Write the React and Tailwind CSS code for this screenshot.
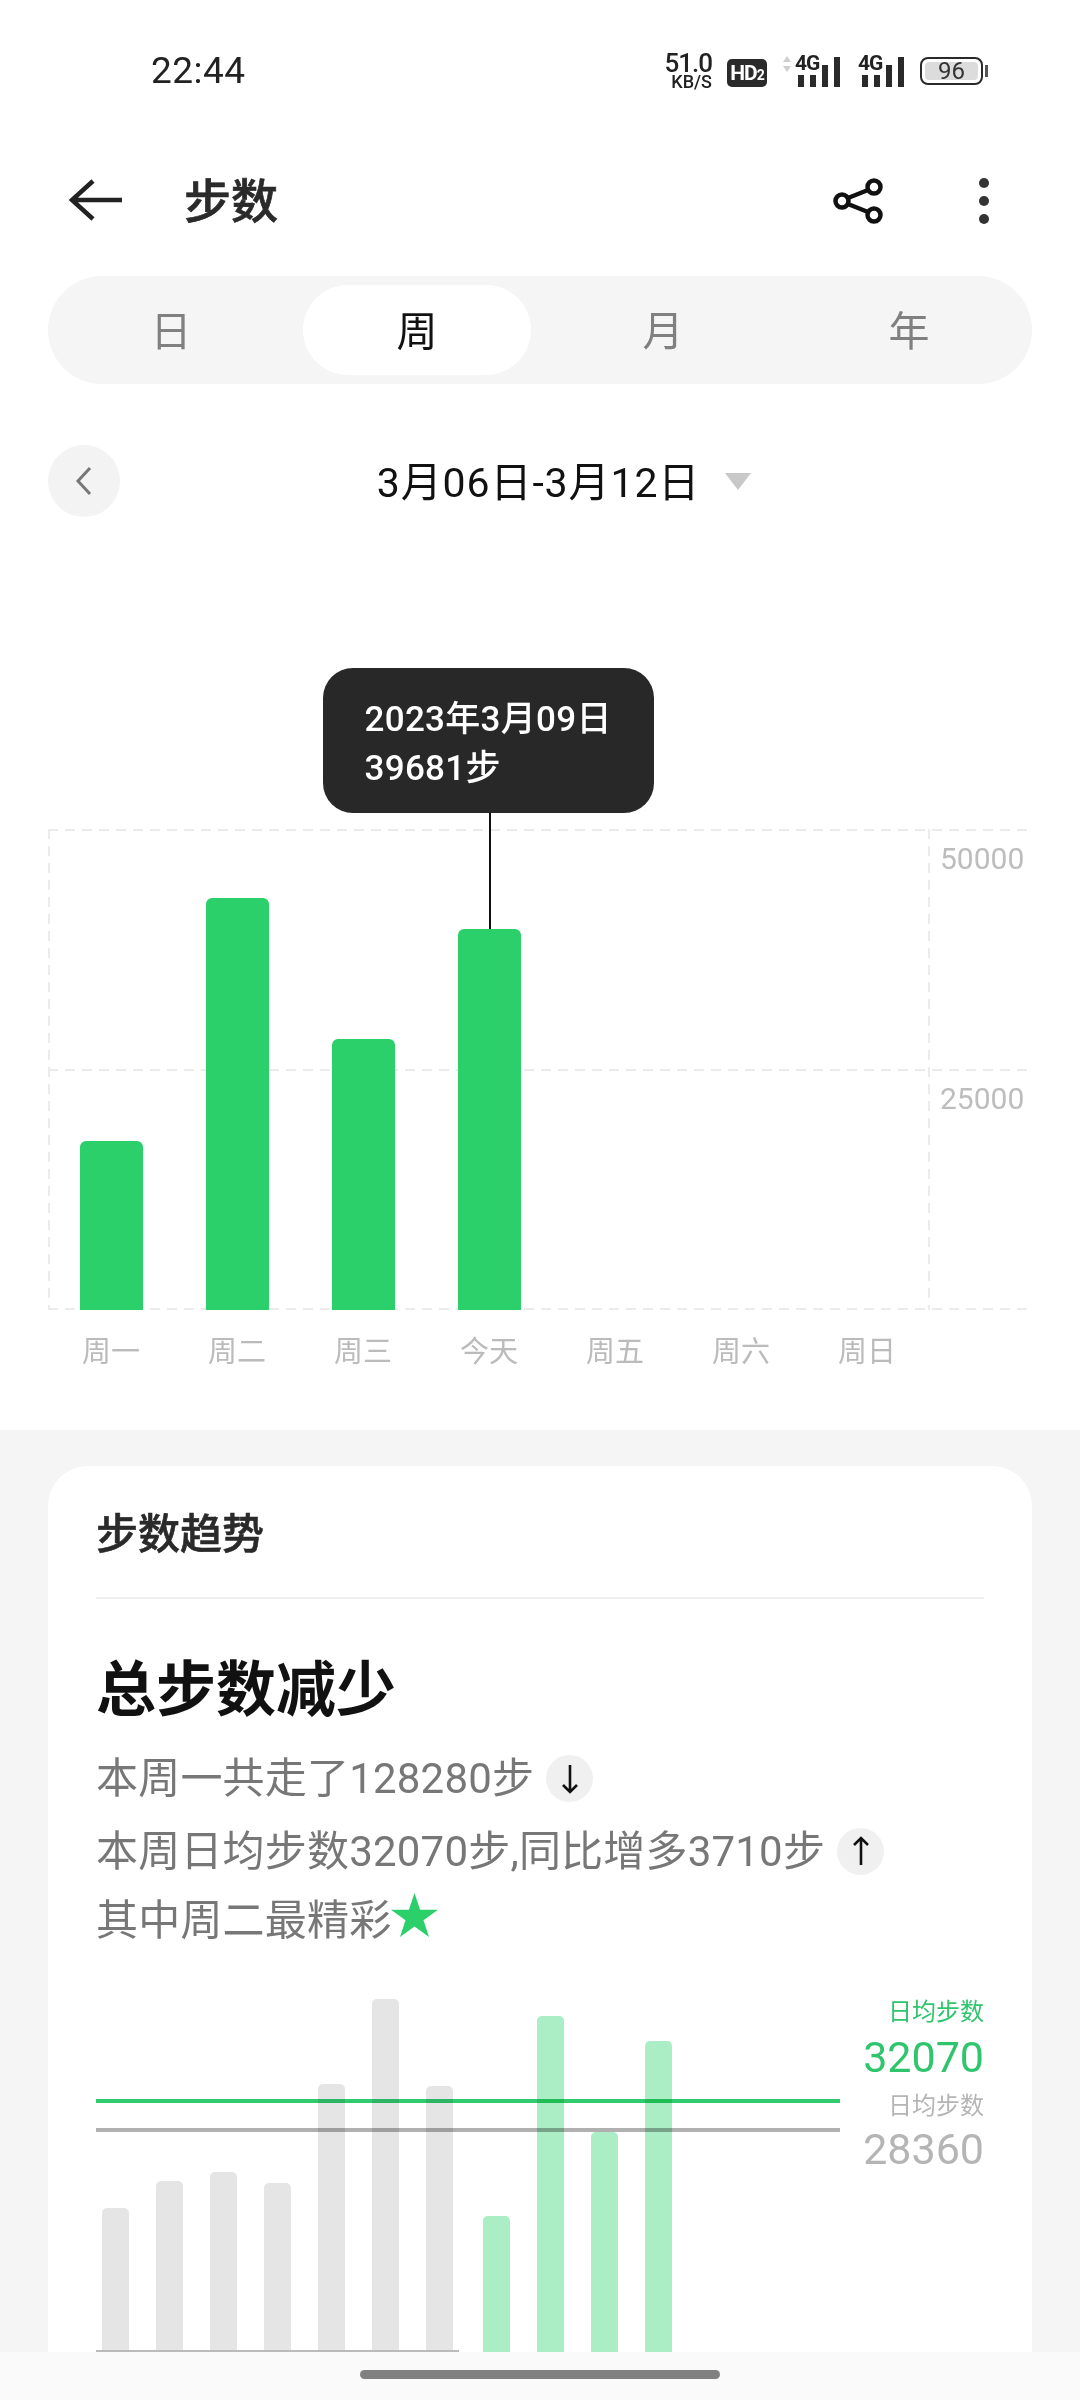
const weekBars = [
  { label: '周一', height: 169 },
  { label: '周二', height: 412 },
  { label: '周三', height: 271 },
  { label: '今天', height: 381, active: true },
  { label: '周五', height: 0 },
  { label: '周六', height: 0 },
  { label: '周日', height: 0 },
];

const lastWeekBars = [144, 171, 180, 169, 268, 353, 266];
const thisWeekBars = [136, 336, 220, 311];

const DashH = () => (
  <div className="h-[2px] w-full bg-[repeating-linear-gradient(90deg,#ebebeb_0,#ebebeb_10px,transparent_10px,transparent_17px)]" />
);

const DashV = () => (
  <div className="w-[2px] h-full bg-[repeating-linear-gradient(180deg,#ebebeb_0,#ebebeb_10px,transparent_10px,transparent_17px)]" />
);

const SignalBars = () => (
  <div className="flex items-end gap-[6px]">
    <div className="w-[6px] h-[12px] bg-[#2a2a2a]" />
    <div className="w-[6px] h-[12px] bg-[#2a2a2a]" />
    <div className="w-[6px] h-[22px] bg-[#2a2a2a]" />
    <div className="w-[6px] h-[30px] bg-[#2a2a2a]" />
  </div>
);

const StatusBar = () => (
  <div className="h-[140px] flex items-start justify-between pl-[151px] pr-[92px] pt-[52px] text-[#222]">
    <span className="text-[37px] leading-[38px] tracking-[0.5px]">22:44</span>
    <div className="flex items-start">
      <div className="w-[48px] flex flex-col items-end font-medium">
        <span className="text-[26px] leading-[22px] tracking-[-1px]">51.0</span>
        <span className="text-[18px] leading-[16px]">KB/S</span>
      </div>
      <div className="ml-[15px] mt-[7px] w-[40px] h-[28px] rounded-[5px] bg-[#2a2a2a] text-white text-[21px] leading-[28px] font-bold text-center tracking-[-1px]">
        HD<span className="text-[14px]">2</span>
      </div>
      <div className="relative ml-[15px] mt-[3px] w-[59px] h-[32px]">
        <svg className="absolute left-0 top-[1px]" width="10" height="16" viewBox="0 0 10 16">
          <path d="M5 0l4 6H1zM5 16l4-6H1z" fill="#cfcfcf" />
        </svg>
        <span className="absolute left-[13px] top-[-2px] text-[21px] leading-[20px] font-bold tracking-[-1px]">4G</span>
        <div className="absolute left-[16px] bottom-0">
          <SignalBars />
        </div>
      </div>
      <div className="relative ml-[17px] mt-[3px] w-[45px] h-[32px]">
        <span className="absolute left-0 top-[-2px] text-[21px] leading-[20px] font-bold tracking-[-1px]">4G</span>
        <div className="absolute left-[4px] bottom-0">
          <SignalBars />
        </div>
      </div>
      <div className="ml-[17px] mt-[5px] flex items-center">
        <div className="w-[63px] h-[28px] rounded-[8px] border-[2px] border-[#2a2a2a] p-[3px]">
          <div className="h-full rounded-[4px] bg-[#dcdcdc] text-[24px] leading-[18px] text-center text-[#333]">96</div>
        </div>
        <div className="ml-[2px] w-[3px] h-[12px] bg-[#555]" />
      </div>
    </div>
  </div>
);

const Header = () => (
  <div className="h-[120px] flex items-center justify-between pl-[68px] pr-[91px]">
    <div className="flex items-center">
      <svg width="56" height="44" viewBox="0 0 56 44" fill="none" stroke="#222" strokeWidth="4.5">
        <path d="M54 22H5M25 3 4 22l21 19" />
      </svg>
      <span className="ml-[60px] pt-[3px] text-[47px] leading-[60px] font-medium text-[#2a2a2a] [-webkit-text-stroke:0.7px_#2a2a2a]">步数</span>
    </div>
    <div className="flex items-center mt-[2px]">
      <svg width="50" height="48" viewBox="0 0 50 48" fill="none" stroke="#111" strokeWidth="4.5">
        <circle cx="9" cy="24" r="6.5" />
        <circle cx="41" cy="10" r="6.5" />
        <circle cx="41" cy="38" r="6.5" />
        <path d="M15 21 35 13M15 27l20 8" />
      </svg>
      <div className="ml-[96px] flex flex-col gap-[8px]">
        <div className="w-[10px] h-[10px] rounded-full bg-[#333]" />
        <div className="w-[10px] h-[10px] rounded-full bg-[#333]" />
        <div className="w-[10px] h-[10px] rounded-full bg-[#333]" />
      </div>
    </div>
  </div>
);

const RangeTabs = () => (
  <div className="mt-[16px] mx-[48px] h-[108px] rounded-full bg-[#f5f5f5] grid grid-cols-4 items-center text-[41px] text-[#808080]">
    <div className="text-center pt-[5px]">日</div>
    <div className="mx-[9px] h-[90px] rounded-[45px] bg-white text-center leading-[95px] text-[#111]">周</div>
    <div className="text-center pt-[5px]">月</div>
    <div className="text-center pt-[5px]">年</div>
  </div>
);

const DateRow = () => (
  <div className="mt-[61px] mx-[48px] h-[72px] relative flex items-center justify-center">
    <div className="absolute left-0 top-0 w-[72px] h-[72px] rounded-full bg-[#f3f3f3] flex items-center justify-center">
      <svg width="18" height="30" viewBox="0 0 18 30" fill="none" stroke="#777" strokeWidth="3">
        <path d="M15 2 3 15l12 13" />
      </svg>
    </div>
    <span className="ml-[48px] pt-[3px] text-[41px] leading-[50px] text-[#111] tracking-[0.9px]">3月06日-3月12日</span>
    <svg className="ml-[25px]" width="26" height="17" viewBox="0 0 26 17">
      <path d="M0 0h26L13 17z" fill="#c8c8c8" />
    </svg>
  </div>
);

const WeekChart = () => (
  <div className="mt-[312px] ml-[48px]">
    <div className="relative flex h-[481px] w-[982px]">
      <div className="absolute inset-0 flex flex-col justify-between">
        <DashH />
        <DashH />
        <DashH />
      </div>
      <div className="relative w-[882px]">
        <div className="absolute inset-0 flex">
          <DashV />
        </div>
        <div className="absolute inset-y-0 right-0 flex">
          <DashV />
        </div>
        <div className="relative grid grid-cols-7 h-full items-end">
          {weekBars.map((bar) => (
            <div key={bar.label} className="flex justify-center">
              <div
                className="relative w-[63px] rounded-t-[6px] bg-[#2bd06b]"
                style={{ height: bar.height }}
              >
                {bar.active && (
                  <div className="absolute bottom-full left-[31px] w-[2px] h-[116px] bg-[#111]">
                    <div className="absolute bottom-full left-[-166px] w-[331px] h-[145px] rounded-[30px] bg-[#282828] pl-[42px] pt-[27px] text-white text-[35px] leading-[49px] font-medium tracking-[0.3px] whitespace-nowrap">
                      <div>2023年3月09日</div>
                      <div>39681步</div>
                    </div>
                  </div>
                )}
              </div>
            </div>
          ))}
        </div>
      </div>
      <div className="w-[100px] text-[30px] leading-[38px] text-[#bdbdbd]">
        <div className="h-[240px] pl-[10px] pt-[11px]">50000</div>
        <div className="h-[240px] pl-[10px] pt-[11px]">25000</div>
      </div>
    </div>
    <div className="grid grid-cols-7 w-[882px] mt-[22px] text-[29px] leading-[40px] text-[#bbbbbb] text-center">
      {weekBars.map((bar) => (
        <div key={bar.label}>{bar.label}</div>
      ))}
    </div>
  </div>
);

const ArrowBadge = ({ up }) => (
  <div className="ml-[12px] w-[47px] h-[47px] rounded-full bg-[#f0f0f0] flex items-center justify-center">
    <svg width="20" height="30" viewBox="0 0 20 30" fill="none" stroke="#111" strokeWidth="2.6">
      {up ? <path d="M10 29V2M3 9l7-7 7 7" /> : <path d="M10 1v27M3 21l7 7 7-7" />}
    </svg>
  </div>
);

const TrendChart = () => (
  <div className="relative flex h-[362px] mt-[36px]">
    <div className="relative w-[744px] h-full">
      <div className="flex items-end h-full pl-[6px]">
        <div className="flex items-end gap-[27px]">
          {lastWeekBars.map((h, i) => (
            <div key={i} className="w-[27px] rounded-t-[5px] bg-[#e5e5e5]" style={{ height: h }} />
          ))}
        </div>
        <div className="ml-[30px] flex items-end gap-[27px]">
          {thisWeekBars.map((h, i) => (
            <div key={i} className="w-[27px] rounded-t-[5px] bg-[#abedc5]" style={{ height: h }} />
          ))}
        </div>
      </div>
      <div className="absolute left-0 right-0 top-[109px] h-[4px] bg-[#2fcb6e] mix-blend-multiply" />
      <div className="absolute left-0 right-0 top-[138px] h-[4px] bg-[#b0b0b0] mix-blend-multiply" />
      <div className="absolute left-0 bottom-0 w-[363px] h-[2px] bg-[#bbbbbb]" />
    </div>
    <div className="flex-1 flex flex-col items-end pt-[7px]">
      <div className="text-[24px] leading-[30px] text-[#2fc56d]">日均步数</div>
      <div className="mt-[7px] text-[43px] leading-[46px] text-[#2fc56d]">32070</div>
      <div className="mt-[11px] text-[24px] leading-[30px] text-[#b5b5b5]">日均步数</div>
      <div className="mt-[5px] text-[43px] leading-[46px] text-[#b5b5b5]">28360</div>
    </div>
  </div>
);

const TrendCard = () => (
  <div className="mt-[36px] mx-[48px] h-[1000px] rounded-t-[40px] bg-white px-[48px]">
    <div className="h-[133px] pt-[6px] flex items-center border-b-[2px] border-[#eeeeee]">
      <span className="text-[42px] font-medium text-[#2a2a2a] [-webkit-text-stroke:0.6px_#2a2a2a]">步数趋势</span>
    </div>
    <div className="mt-[52px] text-[60px] leading-[80px] font-bold text-[#111]">总步数减少</div>
    <div className="mt-[10px] text-[42px] text-[#777777] tracking-[0.2px]">
      <div className="h-[75px] flex items-center">
        本周一共走了128280步
        <ArrowBadge />
      </div>
      <div className="h-[70px] flex items-center">
        本周日均步数32070步,同比增多3710步
        <ArrowBadge up />
      </div>
      <div className="h-[68px] flex items-center">
        其中周二最精彩
        <svg className="mb-[10px]" width="47" height="44" viewBox="0 0 47 44">
          <path d="M23.5 0l5.6 16.8H47L32.5 27.2 38 44 23.5 33.6 9 44l5.5-16.8L0 16.8h17.9z" fill="#2bd06b" />
        </svg>
      </div>
    </div>
    <TrendChart />
  </div>
);

export default function App() {
  return (
    <div className="relative w-[1080px] h-[2400px] overflow-hidden bg-white font-['Roboto','Noto_Sans_CJK_SC',sans-serif]">
      <StatusBar />
      <Header />
      <RangeTabs />
      <DateRow />
      <WeekChart />
      <div className="absolute left-0 right-0 top-[1430px] bottom-0 bg-[#f5f5f5]">
        <TrendCard />
      </div>
      <div className="absolute left-0 right-0 bottom-0 h-[48px] bg-[#fafafa] flex justify-center pt-[18px]">
        <div className="w-[360px] h-[9px] rounded-full bg-[#808080]" />
      </div>
    </div>
  );
}
